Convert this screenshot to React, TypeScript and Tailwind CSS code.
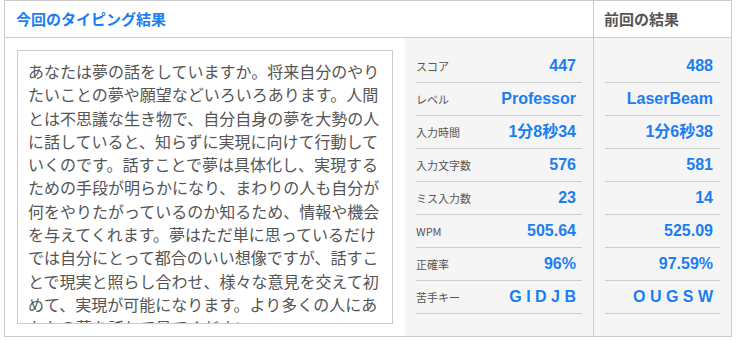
const LINES = [
  "あなたは夢の話をしていますか。将来自分のやり",
  "たいことの夢や願望などいろいろあります。人間",
  "とは不思議な生き物で、自分自身の夢を大勢の人",
  "に話していると、知らずに実現に向けて行動して",
  "いくのです。話すことで夢は具体化し、実現する",
  "ための手段が明らかになり、まわりの人も自分が",
  "何をやりたがっているのか知るため、情報や機会",
  "を与えてくれます。夢はただ単に思っているだけ",
  "では自分にとって都合のいい想像ですが、話すこ",
  "とで現実と照らし合わせ、様々な意見を交えて初",
  "めて、実現が可能になります。より多くの人にあ",
  "なたの夢を話して見てください。",
];

const STATS = [
  { label: "スコア", now: "447", prev: "488" },
  { label: "レベル", now: "Professor", prev: "LaserBeam" },
  { label: "入力時間", now: "1分8秒34", prev: "1分6秒38" },
  { label: "入力文字数", now: "576", prev: "581" },
  { label: "ミス入力数", now: "23", prev: "14" },
  { label: "WPM", now: "505.64", prev: "525.09" },
  { label: "正確率", now: "96%", prev: "97.59%" },
  { label: "苦手キー", now: "G I D J B", prev: "O U G S W" },
];

const jp = "font-['Noto_Sans_CJK_JP',sans-serif]";
const val =
  "font-['Liberation_Sans','Noto_Sans_CJK_JP',sans-serif] text-[16px] font-bold text-[#1a7ef2]";

export default function App() {
  return (
    <div className="bg-white w-[737px] h-[340px]">
      <div className={`ml-[4px] w-[728px] border border-[#cccccc] ${jp}`}>
        {/* Header */}
        <div className="flex h-[37px] border-b border-[#cccccc]">
          <div className="flex w-[588px] items-center pl-[11px] text-[15px] font-bold text-[#1a7ef2]">
            今回のタイピング結果
          </div>
          <div className="flex flex-1 items-center border-l border-[#cccccc] pl-[10px] text-[15px] font-bold text-[#555555]">
            前回の結果
          </div>
        </div>

        {/* Body */}
        <div className="flex h-[298px]">
          <div className="w-[400px] bg-white p-[12px]">
            <div className="h-[274px] overflow-hidden border border-[#cccccc] bg-white px-[10px] pt-[9px] text-[16px] leading-[23.3px] text-[#555555]">
              {LINES.map((l, i) => (
                <div key={i} className="whitespace-nowrap">
                  {l}
                </div>
              ))}
            </div>
          </div>

          <div className="w-[188px] bg-[#f5f5f5] px-[11px] pt-[12px]">
            {STATS.map((s) => (
              <div
                key={s.label}
                className="flex h-[33px] items-center justify-between border-b border-[#cccccc] pr-[6px]"
              >
                <span className="text-[11px] text-[#555555]">{s.label}</span>
                <span className={val}>{s.now}</span>
              </div>
            ))}
          </div>

          <div className="flex-1 border-l border-[#cccccc] bg-[#f5f5f5] px-[11px] pt-[12px]">
            {STATS.map((s) => (
              <div
                key={s.label}
                className="flex h-[33px] items-center justify-end border-b border-[#cccccc] pr-[7px]"
              >
                <span className={val}>{s.prev}</span>
              </div>
            ))}
          </div>
        </div>
      </div>
    </div>
  );
}
